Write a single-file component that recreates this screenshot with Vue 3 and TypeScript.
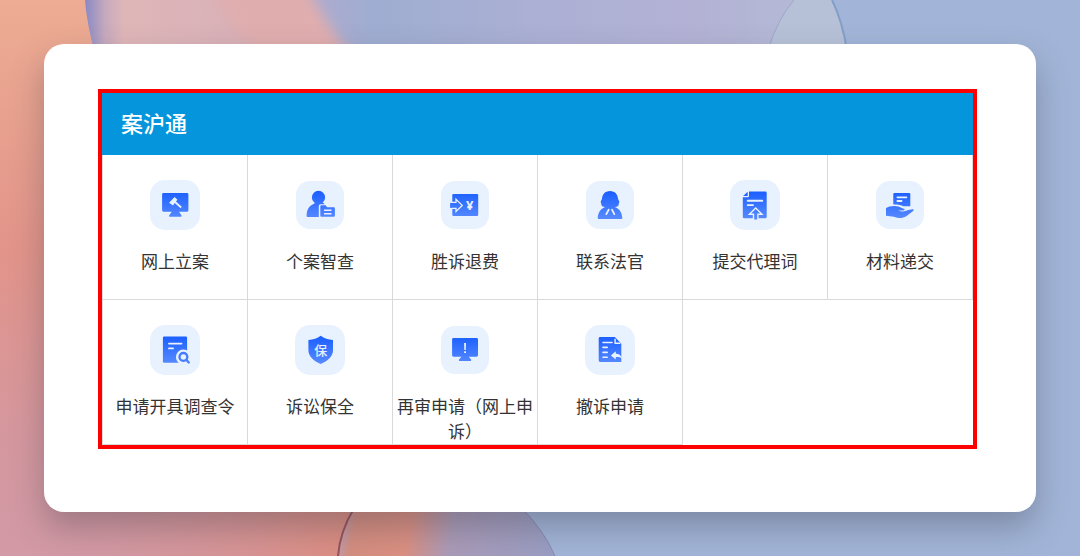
<script setup lang="ts">
interface Service {
  icon: string
  label: string
}

const services: Service[] = [
  { icon: 'gavel', label: '网上立案' },
  { icon: 'person', label: '个案智查' },
  { icon: 'refund', label: '胜诉退费' },
  { icon: 'judge', label: '联系法官' },
  { icon: 'upload', label: '提交代理词' },
  { icon: 'hand', label: '材料递交' },
  { icon: 'search', label: '申请开具调查令' },
  { icon: 'shield', label: '诉讼保全' },
  { icon: 'alert', label: '再审申请（网上申诉）' },
  { icon: 'withdraw', label: '撤诉申请' },
]
</script>

<template>
  <div class="page">
    <svg class="backdrop" viewBox="0 0 1080 556" preserveAspectRatio="none" aria-hidden="true">
      <defs>
        <linearGradient id="bg-left" x1="0" y1="0" x2="0" y2="1">
          <stop offset="0" stop-color="#edac93" />
          <stop offset="0.45" stop-color="#e2948a" />
          <stop offset="0.8" stop-color="#d4979f" />
          <stop offset="1" stop-color="#d29aa6" />
        </linearGradient>
        <linearGradient id="bg-bottom" x1="0" y1="0" x2="1" y2="0">
          <stop offset="0" stop-color="#d39aa8" stop-opacity="0" />
          <stop offset="1" stop-color="#dd8d80" />
        </linearGradient>
        <linearGradient id="bg-petal" gradientUnits="userSpaceOnUse" x1="86" y1="0" x2="850" y2="0">
          <stop offset="0" stop-color="#8b8bc4" />
          <stop offset="0.025" stop-color="#c6a9be" />
          <stop offset="0.05" stop-color="#dfb6b8" />
          <stop offset="0.2" stop-color="#d8b1b8" />
          <stop offset="0.29" stop-color="#aeabcf" />
          <stop offset="0.38" stop-color="#9eadd1" />
          <stop offset="0.6" stop-color="#acb0d4" />
          <stop offset="0.8" stop-color="#b3b2d5" />
          <stop offset="1" stop-color="#b5bdd7" />
        </linearGradient>
        <linearGradient id="bg-bulb" gradientUnits="userSpaceOnUse" x1="338" y1="520" x2="556" y2="560">
          <stop offset="0" stop-color="#b9a0b8" />
          <stop offset="0.08" stop-color="#d58e80" />
          <stop offset="0.32" stop-color="#db8f82" />
          <stop offset="0.52" stop-color="#aa9bb8" />
          <stop offset="1" stop-color="#999ec4" />
        </linearGradient>
        <filter id="bg-soft" x="-50%" y="-50%" width="200%" height="200%">
          <feGaussianBlur stdDeviation="7" />
        </filter>
      </defs>
      <rect width="1080" height="556" fill="#a2b5d8" />
      <path d="M0 0H86Q96 90 160 220T350 556H0Z" fill="url(#bg-left)" />
      <path d="M0 500H350V556H0Z" fill="url(#bg-bottom)" />
      <path d="M85 0Q90 70 160 220H850Q862 80 832 0Z" fill="url(#bg-petal)" />
      <path d="M210 -20H304Q322 20 356 62H270Q235 45 210 -20Z" fill="#e0adae" filter="url(#bg-soft)" />
      <path d="M794 0Q778 18 768 50H848Q842 20 832 0Z" fill="#b6c1d8" />
      <path d="M794 0Q778 18 768 50" fill="none" stroke="#9ea6cb" />
      <path d="M832 0Q842 20 847 50" fill="none" stroke="#839fc7" stroke-width="2" />
      <path d="M338 556Q340 530 356 505H519Q544 530 555 556Z" fill="url(#bg-bulb)" />
      <path d="M338 556Q340 530 356 505" fill="none" stroke="#98535d" stroke-width="2" />
      <path d="M519 505Q544 530 555 556" fill="none" stroke="#8589b5" />
    </svg>

    <main class="card">
      <section class="panel" aria-labelledby="panel-title">
        <h1 id="panel-title" class="title">案沪通</h1>
        <ul class="grid">
          <li v-for="item in services" :key="item.label" class="cell">
            <a class="link" href="#">
              <svg class="icon" viewBox="0 0 50 50" aria-hidden="true">
                <defs>
                  <linearGradient :id="'fill-' + item.icon" gradientUnits="userSpaceOnUse" x1="0" y1="12" x2="0" y2="38">
                    <stop offset="0" stop-color="#1c60ff" />
                    <stop offset="1" stop-color="#5689ff" />
                  </linearGradient>
                </defs>
                <rect
                  v-if="['gavel', 'upload', 'search', 'shield', 'withdraw'].includes(item.icon)"
                  width="50" height="50" rx="15" fill="#e8f2ff"
                />
                <rect v-else x="1" y="1" width="48" height="48" rx="14" fill="#e8f2ff" />

                <g :fill="`url(#fill-${item.icon})`">
                  <template v-if="item.icon === 'gavel'">
                    <path d="M13.5 13H37a1.4 1.4 0 0 1 1.4 1.4V30.3A1.4 1.4 0 0 1 37 31.7H29l2.4 3.6v1.4H19.2v-1.4l2.6-3.6H13.5a1.4 1.4 0 0 1-1.4-1.4V14.4A1.4 1.4 0 0 1 13.5 13Z" />
                    <path d="M24.6 17L27.4 19.8 26 21.400l5.800 5.400-1.200 1.400-5.900-5.200-1.700 2.400-3.900-2.600Z" fill="#e8f2ff" />
                  </template>

                  <template v-else-if="item.icon === 'person'">
                    <circle cx="23.5" cy="17.4" r="6.6" />
                    <path d="M19.5 22.300h8.200l2 1.900h-4.200a1.700 1.700 0 0 0-1.700 1.700v11H12.600a1 1 0 0 1-1-1c0-5.900 2.300-10.200 7.900-12.400Z" />
                    <path d="M26.500 25.300h4l1.700 2h6.500a1.200 1.200 0 0 1 1.200 1.200v7.100a1.200 1.200 0 0 1-1.200 1.200H26.500a1.200 1.200 0 0 1-1.200-1.200v-9.100a1.200 1.200 0 0 1 1.200-1.200Z" />
                    <path d="M29 30.300h7.500M29 33.800h7.500" stroke="#e8f2ff" stroke-width="1.400" />
                  </template>

                  <template v-else-if="item.icon === 'refund'">
                    <rect x="12.300" y="14" width="25.900" height="22" rx="1.300" />
                    <path d="M10 22.400h6v-3l6.200 6-6.200 6v-3h-6Z" stroke="#e8f2ff" stroke-width="1.300" />
                    <path d="M10.200 23h1.400v4.900h-1.400Z" />
                    <text class="yen" x="29.700" y="29.700" text-anchor="middle">¥</text>
                  </template>

                  <template v-else-if="item.icon === 'judge'">
                    <path d="M25 10.900c-5 0-7.800 3.600-8 7.600-.1 1.500-1.300 2-1.300 3.500 0 1.100.8 1.600.6 2.600-.2 1.700 2 2.500 4 2.400-4.800 1.600-7.400 6-7.600 11a1 1 0 0 0 1 1h22.600a1 1 0 0 0 1-1c-.2-5-2.800-9.400-7.600-11 2 .1 4.200-.7 4-2.400-.2-1 .6-1.500.6-2.600 0-1.500-1.200-2-1.300-3.500-.2-4-3-7.600-8-7.600Z" />
                    <path d="M23.700 29.700l-2.400 4.400M27 29.700l2.300 4.400" stroke="#e8f2ff" stroke-width="1.800" stroke-linecap="round" />
                  </template>

                  <template v-else-if="item.icon === 'upload'">
                    <path d="M19 11.600h16.400a1.300 1.300 0 0 1 1.300 1.300v24a1.300 1.300 0 0 1-1.300 1.300H14.100a1.300 1.300 0 0 1-1.300-1.300V17.300h5a1.200 1.200 0 0 0 1.200-1.200Z" />
                    <path d="M17.700 11.800v4.300h-4.600Z" />
                    <path d="M17.700 20.700h14.600M17.700 25.100h5.300" stroke="#e8f2ff" stroke-width="1.900" stroke-linecap="round" />
                    <path d="M25.700 27.900l6.300 6.300h-4.100v6h-4.400v-6h-4.100Z" stroke="#e8f2ff" stroke-width="1.400" />
                  </template>

                  <template v-else-if="item.icon === 'hand'">
                    <path d="M19.300 13h15a1 1 0 0 1 1 1v12.300h-6.900c-2.400-1.400-5.700-2-10.100-1.900V14a1 1 0 0 1 1-1Z" />
                    <path d="M22.400 17.300h9M22.400 21h4.200" stroke="#e8f2ff" stroke-width="1.800" stroke-linecap="round" />
                    <path d="M11 28l3.400-1.500c5-1.200 9.300-.6 12.500 1.500 1.500.8 2.900.5 2.800 1.500-.1 1-2.500 1.200-6.700.7 3.200 1.700 6.700 1.500 9.600.1l4.700-1c1.500-.2 2 .7.800 1.700l-6.800 5.200c-4.200 2.500-8.300 2-12.500.5L11 35.800Z" />
                  </template>

                  <template v-else-if="item.icon === 'search'">
                    <rect x="12.900" y="11.500" width="24.200" height="26.300" rx="1.300" />
                    <path d="M19 18.600h12.500M19 23.400h4" stroke="#e8f2ff" stroke-width="1.900" stroke-linecap="round" />
                    <circle cx="33.400" cy="32" r="7.500" fill="#e8f2ff" />
                    <circle cx="33.400" cy="31.900" r="3.900" fill="none" stroke="#447bff" stroke-width="2.300" />
                    <path d="M36.300 34.900l2.500 2.600" stroke="#4c81ff" stroke-width="2.400" stroke-linecap="round" />
                  </template>

                  <template v-else-if="item.icon === 'shield'">
                    <path d="M25.700 10.700c3.500 2.600 7.400 4 12.300 4.200v10.300c0 6.300-5.300 10.500-12.300 13.900-7-3.400-12.300-7.600-12.300-13.900V14.900c4.900-.2 8.800-1.600 12.300-4.200Z" />
                    <text class="seal" x="25.700" y="29.700" text-anchor="middle">保</text>
                  </template>

                  <template v-else-if="item.icon === 'alert'">
                    <path d="M13.500 13H36.600a1.400 1.400 0 0 1 1.400 1.400V30.300a1.400 1.400 0 0 1-1.400 1.400H28.800l2.300 2.900v1.300H19v-1.300l2.500-2.900h-8a1.400 1.400 0 0 1-1.400-1.400V14.400A1.400 1.400 0 0 1 13.500 13Z" />
                    <path d="M24.200 18h1.700l-.2 7h-1.300ZM24.200 26.300h1.700v1.600h-1.700Z" fill="#fff" />
                  </template>

                  <template v-else>
                    <path d="M15.100 12H29.800l6.500 6.700V37H15.100a1.400 1.400 0 0 1-1.400-1.400V13.400a1.400 1.400 0 0 1 1.400-1.400Z" />
                    <path d="M25.900 30.500l4.900-4.200v2.400c3.300-.1 5.200 1.600 6.200 4.800-1.900-1.400-3.800-1.700-6.200-1.500v2.600Z" fill="#e8f2ff" />
                    <path d="M30.100 13.800v4.400h5.300" fill="none" stroke="#e8f2ff" stroke-width="1.400" />
                    <path d="M18 17.500h9M18 22.400h4.200M18 27.400h4.200M18 32.300h4.200" stroke="#e8f2ff" stroke-width="1.600" stroke-linecap="round" />
                  </template>
                </g>
              </svg>
              <span class="label">{{ item.label }}</span>
            </a>
          </li>
        </ul>
      </section>
    </main>
  </div>
</template>

<style>
body {
  margin: 0;
}
</style>

<style scoped>
.page {
  position: relative;
  box-sizing: border-box;
  display: flex;
  min-height: 100vh;
  padding: 44px;
  font-family: 'Noto Sans CJK SC', sans-serif;
}

.backdrop {
  position: absolute;
  inset: 0;
  width: 100%;
  height: 100%;
}

.card {
  position: relative;
  box-sizing: border-box;
  flex: 1;
  min-width: 0;
  padding: 45px 59px 45px 54px;
  border-radius: 20px;
  background: #fff;
  box-shadow: 0 16px 32px rgba(60, 60, 70, 0.34);
}

.panel {
  border: 4px solid #fe0000;
}

.title {
  margin: 0;
  padding: 0 19px 4px;
  background: #0595dc;
  color: #fff;
  font-size: 22px;
  font-weight: 500;
  line-height: 58px;
}

.grid {
  display: grid;
  grid-template-columns: repeat(6, minmax(0, 1fr));
  margin: 0;
  padding: 0;
  border-left: 1px solid #d9d9d9;
  list-style: none;
}

.cell {
  box-sizing: border-box;
  min-height: 145px;
  border-right: 1px solid #d9d9d9;
  border-bottom: 1px solid #d9d9d9;
}

.link {
  display: flex;
  flex-direction: column;
  align-items: center;
  gap: 18px;
  padding-top: 25px;
  color: #333;
  text-decoration: none;
}

.icon {
  width: 50px;
  height: 50px;
}

.label {
  padding: 0 2px;
  font-size: 17px;
  line-height: 25px;
  text-align: center;
}

.yen {
  fill: #e8f2ff;
  font-family: 'Noto Sans', sans-serif;
  font-size: 13px;
  font-weight: 700;
}

.seal {
  fill: #e8f2ff;
  font-size: 13px;
  font-weight: 500;
}
</style>
